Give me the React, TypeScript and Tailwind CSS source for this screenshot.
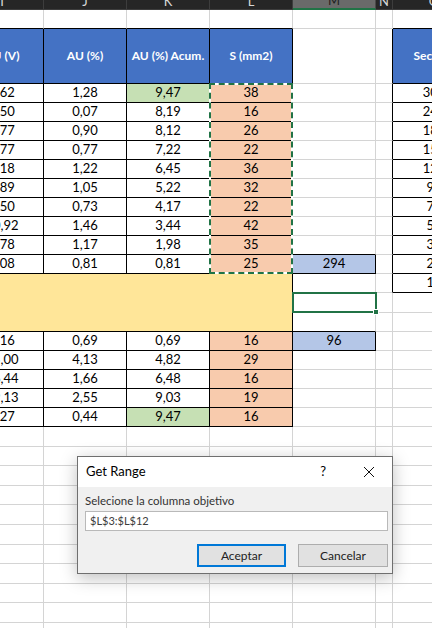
import React from 'react';

const GRAY = 'border-r border-b border-[#d4d4d4]';
const BLACK = 'border-r border-b border-black';
const GRAY_R_BLACK_B = 'border-r border-b border-r-[#d4d4d4] border-b-black';
const BLACK_R_GRAY_B = 'border-r border-b border-r-black border-b-[#d4d4d4]';

const upper = [
  { v: '2,62', p: '1,28', a: '9,47', s: '38' },
  { v: '0,50', p: '0,07', a: '8,19', s: '16' },
  { v: '2,77', p: '0,90', a: '8,12', s: '26' },
  { v: '2,77', p: '0,77', a: '7,22', s: '22' },
  { v: '4,18', p: '1,22', a: '6,45', s: '36' },
  { v: '3,89', p: '1,05', a: '5,22', s: '32' },
  { v: '2,50', p: '0,73', a: '4,17', s: '22' },
  { v: '10,92', p: '1,46', a: '3,44', s: '42' },
  { v: '4,78', p: '1,17', a: '1,98', s: '35' },
  { v: '3,08', p: '0,81', a: '0,81', s: '25' },
];

const lower = [
  { v: '2,16', p: '0,69', a: '0,69', s: '16' },
  { v: '15,00', p: '4,13', a: '4,82', s: '29' },
  { v: '16,44', p: '1,66', a: '6,48', s: '16' },
  { v: '19,13', p: '2,55', a: '9,03', s: '19' },
  { v: '1,27', p: '0,44', a: '9,47', s: '16' },
];

const secciones = ['300', '240', '185', '150', '120', '95', '70', '50', '35', '25', '16'];

function Cell({ cls, children }: { cls: string; children?: React.ReactNode }) {
  return (
    <div className={`relative flex items-center justify-center overflow-visible whitespace-nowrap ${cls}`}>
      {children}
    </div>
  );
}

function ColHeader({ label, selected }: { label: string; selected?: boolean }) {
  return (
    <div
      className={`flex items-end justify-center overflow-hidden border-r ${
        selected
          ? 'bg-[#6a6a6a] border-r-[#4a4a4a] border-b-2 border-b-[#217346] text-[#1e1e1e]'
          : 'bg-[#262626] border-r-[#3d3d3d] border-b border-b-[#3d3d3d] text-[#d6d6d6]'
      }`}
    >
      <span className="text-[13px] leading-none pb-[1px]">{label}</span>
    </div>
  );
}

export default function App() {
  const cells: React.ReactNode[] = [];
  let k = 0;
  const add = (cls: string, content?: React.ReactNode) => {
    cells.push(
      <Cell key={k++} cls={cls}>
        {content}
      </Cell>
    );
  };

  // row 1 (empty)
  for (let i = 0; i < 4; i++) add(GRAY_R_BLACK_B);
  add(GRAY);
  add(GRAY);
  add(GRAY_R_BLACK_B);

  // header row
  const head = `${BLACK} bg-[#4472c4] text-white font-bold text-[12px]`;
  ['AU (V)', 'AU (%)', 'AU (%) Acum.', 'S (mm2)'].forEach((h) => add(head, h));
  add(GRAY);
  add(BLACK_R_GRAY_B);
  add(head, 'Sección');

  // upper table
  upper.forEach((r, i) => {
    add(`${BLACK} bg-white`, r.v);
    add(`${BLACK} bg-white`, r.p);
    add(`${BLACK} ${i === 0 ? 'bg-[#c6e0b4]' : 'bg-white'}`, r.a);
    add(
      `${BLACK} bg-[#f8cbad]`,
      <>
        {r.s}
        {i === 0 && (
          <div className="pointer-events-none absolute left-[-1px] top-[-1px] z-10 h-[191px] w-[84px] border-2 border-white">
            <div className="absolute inset-[-2px] border-2 border-dashed border-[#217346]" />
          </div>
        )}
      </>
    );
    if (i === 9) add(`${BLACK} bg-[#b4c6e7]`, '294');
    else if (i === 8) add(GRAY_R_BLACK_B);
    else add(GRAY);
    add(BLACK_R_GRAY_B);
    add(`${BLACK} bg-white`, secciones[i]);
  });

  // yellow merged band, first row
  add(`${BLACK} col-span-4 row-span-3 bg-[#ffe699]`);
  add(GRAY);
  add(BLACK_R_GRAY_B);
  add(`${BLACK} bg-white`, secciones[10]);

  // yellow second row with selected cell
  add(
    GRAY,
    <div className="pointer-events-none absolute left-[-1px] top-[-1px] z-10 h-[21px] w-[85px] border-2 border-[#217346]">
      <div className="absolute bottom-[-4px] right-[-4px] h-[6px] w-[6px] bg-[#217346] border border-white" />
    </div>
  );
  add(GRAY);
  add(GRAY);

  // yellow third row
  add(GRAY_R_BLACK_B);
  add(GRAY);
  add(GRAY);

  // lower table
  lower.forEach((r, i) => {
    add(`${BLACK} bg-white`, r.v);
    add(`${BLACK} bg-white`, r.p);
    add(`${BLACK} ${i === 4 ? 'bg-[#c6e0b4]' : 'bg-white'}`, r.a);
    add(`${BLACK} bg-[#f8cbad]`, r.s);
    if (i === 0) add(`${BLACK} bg-[#b4c6e7]`, '96');
    else add(GRAY);
    add(GRAY);
    add(GRAY);
  });

  // empty rows
  for (let r = 0; r < 11; r++) {
    for (let c = 0; c < 7; c++) add(GRAY);
  }

  return (
    <div className="relative h-[628px] w-[432px] overflow-hidden bg-white font-['Lato',sans-serif] text-[13px] text-black">
      <div className="-ml-[39px] grid w-[515px] grid-cols-[83px_83px_83px_83px_83px_17px_83px] grid-rows-[10px_19px_55px_repeat(10,19px)_19px_20px_19px_repeat(5,19px)_repeat(11,19.6px)]">
        <ColHeader label="I" />
        <ColHeader label="J" />
        <ColHeader label="K" />
        <ColHeader label="L" />
        <ColHeader label="M" selected />
        <ColHeader label="N" />
        <ColHeader label="O" />
        {cells}
      </div>

      {/* Get Range dialog */}
      <div className="absolute left-[77px] top-[456px] flex h-[118px] w-[316px] flex-col border border-[#6f6f6f] bg-[#f0f0f0] font-['Lato',sans-serif] shadow-[0_4px_16px_rgba(0,0,0,0.25)]">
        <div className="flex h-[30px] items-center bg-white pl-[8px]">
          <span className="text-[13px] text-black">Get Range</span>
          <span className="ml-auto mr-[37px] text-[13px] text-black">?</span>
          <svg width="12" height="12" viewBox="0 0 12 12" className="mr-[17px]">
            <path d="M1 1 L11 11 M11 1 L1 11" stroke="#111" strokeWidth="1" fill="none" />
          </svg>
        </div>
        <div className="flex flex-1 flex-col pl-[7px] pr-[4px] pt-[6px]">
          <span className="text-[11.5px] leading-[16px] text-[#333]">Selecione la columna objetivo</span>
          <div className="mt-[2px] flex h-[20px] w-[303px] items-center border border-[#b9b9b9] bg-white px-[4px] text-[11px] text-[#3c3c3c]">
            $L$3:$L$12
          </div>
          <div className="mt-[13px] flex justify-end gap-[12px]">
            <button className="h-[23px] w-[89px] border-2 border-[#0078d7] bg-[#e1e1e1] text-[12px] text-[#222]">
              Aceptar
            </button>
            <button className="h-[23px] w-[90px] border border-[#adadad] bg-[#e1e1e1] text-[12px] text-[#222]">
              Cancelar
            </button>
          </div>
        </div>
      </div>
    </div>
  );
}
